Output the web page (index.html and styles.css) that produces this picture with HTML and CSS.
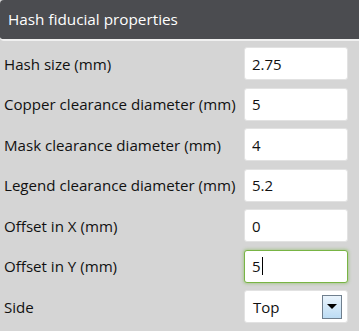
FILE: index.html
```html
<!DOCTYPE html>
<html lang="en">
<head>
  <meta charset="UTF-8" />
  <title>Hash fiducial properties</title>
  <link rel="stylesheet" href="styles.css">
</head>
<body>

  <div class="panel">
    <div class="panel-title">Hash fiducial properties</div>
    <form class="props">
      <label for="hashSize">Hash size (mm)</label>
      <input type="text" id="hashSize" value="2.75">

      <label for="copper">Copper clearance diameter (mm)</label>
      <input type="text" id="copper" value="5">

      <label for="mask">Mask clearance diameter (mm)</label>
      <input type="text" id="mask" value="4">

      <label for="legend">Legend clearance diameter (mm)</label>
      <input type="text" id="legend" value="5.2">

      <label for="offX">Offset in X (mm)</label>
      <input type="text" id="offX" value="0">

      <label for="offY">Offset in Y (mm)</label>
      <div class="field focused">5<span class="caret"></span></div>

      <label for="side">Side</label>
      <div class="select" id="side">
        <span>Top</span>
        <span class="drop-btn"><span class="arrow"></span></span>
      </div>
    </form>
  </div>

</body>
</html>
```

FILE: styles.css
```css
body {
  margin: 0;
  font-family: "Open Sans", "Noto Sans", sans-serif;
  background-color: #d5d5d5;
  color: #111;
}
.panel {
  width: 359px;
  height: 331px;
  background-color: #d5d5d5;
}
.panel-title {
  height: 39px;
  line-height: 38px;
  padding-left: 8px;
  background-color: #4b4c50;
  color: #fff;
  font-size: 15.3px;
  border-radius: 4px 0 0 4px;
  border-bottom: 2px solid #f0f0f0;
}
.props {
  display: grid;
  grid-template-columns: 1fr 104px;
  grid-auto-rows: 40.5px;
  align-items: center;
  padding: 2.5px 11px 0 4px;
  column-gap: 6px;
}
.props label {
  font-size: 15.1px;
  white-space: nowrap;
}
.props input,
.field,
.select {
  box-sizing: border-box;
  width: 104px;
  height: 33px;
  margin: 0;
  padding: 0 7px;
  border: 1px solid #e2e2e2;
  border-radius: 3px;
  background-color: #fff;
  font-family: inherit;
  font-size: 15px;
  color: #111;
}
.field {
  display: flex;
  align-items: center;
}
.focused {
  border: 1px solid #78b444;
  box-shadow: 0 0 3px 1px rgba(120, 180, 68, 0.45);
}
.caret {
  width: 1px;
  height: 18px;
  background-color: #000;
  margin-left: 1px;
}
.select {
  display: flex;
  align-items: center;
  justify-content: space-between;
  padding: 0 5px 0 8px;
}
.drop-btn {
  box-sizing: border-box;
  width: 20px;
  height: 24px;
  border: 1px solid #6f7f8e;
  background: linear-gradient(#eaf4fc, #bcdcf4);
  display: flex;
  align-items: center;
  justify-content: center;
}
.arrow {
  width: 0;
  height: 0;
  border-left: 5px solid transparent;
  border-right: 5px solid transparent;
  border-top: 5px solid #000;
}
```
